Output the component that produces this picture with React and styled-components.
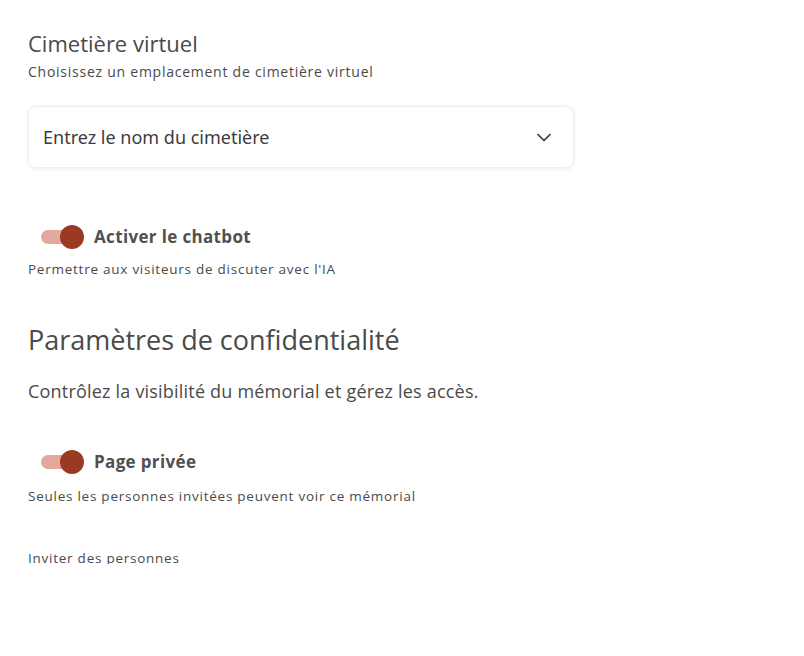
import React from "react";
import styled, { createGlobalStyle } from "styled-components";

const Global = createGlobalStyle`
  html, body { margin: 0; padding: 0; background: #fff; }
  body { font-family: "Open Sans", "Noto Sans", sans-serif; color: #4a4a4a; }
`;

const Page = styled.div`
  height: 564px;
  overflow: hidden;
  padding: 29px 28px 0;
  box-sizing: border-box;
  width: 804px;
`;

const Section = styled.section`
  display: flex;
  flex-direction: column;
  padding-top: ${(p) => p.$pt || 0}px;
`;

const Title = styled.h2`
  margin: 0;
  font-weight: 400;
  font-size: ${(p) => p.$size || 22}px;
  line-height: 1.3;
  color: #4a4a4a;
`;

const Sub = styled.p`
  margin: ${(p) => p.$mt || 0}px 0 0;
  font-size: ${(p) => p.$size || 14}px;
  line-height: 1.4;
  color: #4a4a4a;
  letter-spacing: ${(p) => p.$ls || 0}px;
`;

const Select = styled.div`
  margin-top: 25px;
  width: 546px;
  height: 62px;
  box-sizing: border-box;
  border-radius: 8px;
  border: 1px solid #eeeeee;
  box-shadow: 0 1px 4px rgba(0, 0, 0, 0.08);
  display: flex;
  align-items: center;
  justify-content: space-between;
  padding: 0 22px 0 14px;
  font-family: "Noto Sans", sans-serif;
  font-size: 18px;
  color: #3c3c3c;
`;

const ToggleRow = styled.div`
  margin-top: ${(p) => p.$mt}px;
  display: flex;
  align-items: center;
  gap: 13px;
  padding-left: 13px;
`;

const Track = styled.span`
  position: relative;
  width: 40px;
  height: 14px;
  border-radius: 7px;
  background: #e3a99c;
  display: inline-block;
`;

const Thumb = styled.span`
  position: absolute;
  right: -3px;
  top: -5px;
  width: 24px;
  height: 24px;
  border-radius: 50%;
  background: #9b3a22;
`;

const ToggleLabel = styled.span`
  font-weight: 700;
  font-size: 17px;
  letter-spacing: 0.35px;
  color: #505050;
`;

const Small = styled.p`
  margin: ${(p) => p.$mt}px 0 0;
  font-size: 13.5px;
  line-height: 1.4;
  color: #4a4a4a;
  letter-spacing: 0.75px;
`;

const Toggle = () => (
  <Track>
    <Thumb />
  </Track>
);

const Chevron = () => (
  <svg width="14" height="9" viewBox="0 0 14 9" fill="none">
    <path d="M1 1.5l6 6 6-6" stroke="#333" strokeWidth="1.6" strokeLinecap="round" strokeLinejoin="round" />
  </svg>
);

export default function App() {
  return (
    <>
      <Global />
      <Page>
        <Section>
          <Title $size={22}>Cimetière virtuel</Title>
          <Sub $mt={4} $ls={0.75}>Choisissez un emplacement de cimetière virtuel</Sub>
          <Select>
            <span>Entrez le nom du cimetière</span>
            <Chevron />
          </Select>
          <ToggleRow $mt={57}>
            <Toggle />
            <ToggleLabel>Activer le chatbot</ToggleLabel>
          </ToggleRow>
          <Small $mt={12}>Permettre aux visiteurs de discuter avec l'IA</Small>
        </Section>
        <Section $pt={43}>
          <Title $size={27}>Paramètres de confidentialité</Title>
          <Sub $size={18} $mt={22} $ls={0.2}>Contrôlez la visibilité du mémorial et gérez les accès.</Sub>
          <ToggleRow $mt={46}>
            <Toggle />
            <ToggleLabel>Page privée</ToggleLabel>
          </ToggleRow>
          <Small $mt={14}>Seules les personnes invitées peuvent voir ce mémorial</Small>
          <Small $mt={43}>Inviter des personnes</Small>
        </Section>
      </Page>
    </>
  );
}
